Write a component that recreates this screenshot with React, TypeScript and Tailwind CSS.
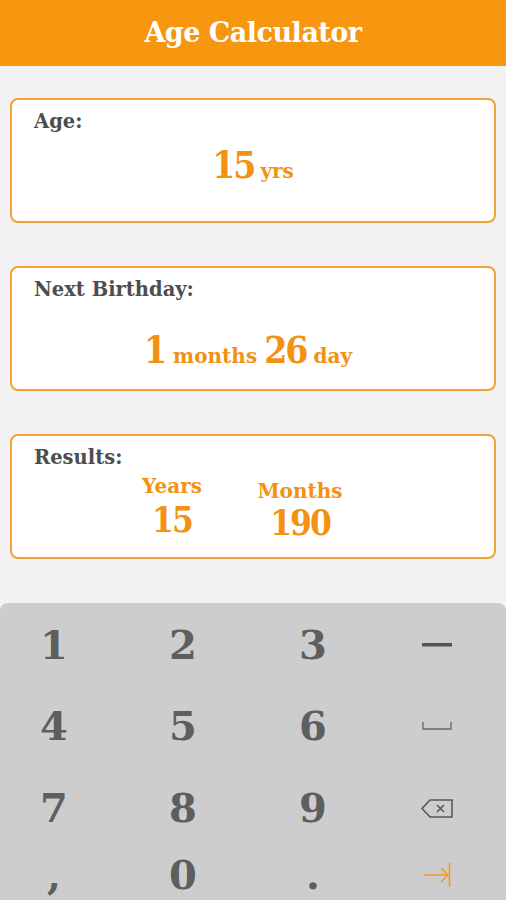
const serif = { fontFamily: '"DejaVu Serif", "Liberation Serif", serif' };

function Card({ label, children, className }: { label: string; children: React.ReactNode; className?: string }) {
  return (
    <div className={`mx-[10px] h-[125px] rounded-[8px] border-2 border-[#f4a135] bg-white px-[22px] ${className ?? ""}`}>
      <p className="pt-[8px] text-[19.5px] font-semibold leading-[28px] text-[#4d4d4d]">{label}</p>
      {children}
    </div>
  );
}

function Minus() {
  return (
    <svg width="30" height="4" viewBox="0 0 30 4">
      <rect x="0" y="0" width="30" height="3.5" fill="#555" />
    </svg>
  );
}

function Space() {
  return (
    <svg width="30" height="10" viewBox="0 0 30 10" fill="none" stroke="#666" strokeWidth="1.3">
      <path d="M1 1v7h28V1" />
    </svg>
  );
}

function Backspace() {
  return (
    <svg width="32" height="19" viewBox="0 0 32 19" fill="none" stroke="#555" strokeWidth="1.5">
      <path d="M9 1h22v17H9L1 9.5z" />
      <path d="M16 6l7 7M23 6l-7 7" />
    </svg>
  );
}

function TabArrow() {
  return (
    <svg width="27" height="24" viewBox="0 0 27 24" fill="none" stroke="#f39a1e" strokeWidth="1.5">
      <path d="M0 12h24M17 5l7 7-7 7M25.5 0v24" />
    </svg>
  );
}

const keys: React.ReactNode[] = [
  "1", "2", "3", <Minus key="m" />,
  "4", "5", "6", <Space key="s" />,
  "7", "8", "9", <Backspace key="b" />,
  ",", "0", ".", <TabArrow key="t" />,
];

export default function App() {
  return (
    <div className="flex h-[900px] w-[506px] flex-col overflow-hidden bg-[#f2f2f2]" style={serif}>
      {/* header */}
      <div className="flex h-[66px] items-center justify-center bg-[#f7960f]">
        <h1 className="text-[27px] font-bold tracking-[-0.5px] text-white">Age Calculator</h1>
      </div>

      <Card label="Age:" className="mt-[32px]">
        <div className="mt-[9px] flex items-baseline justify-center font-bold text-[#f39212]">
          <span className="text-[37px] leading-[40px] tracking-[-2px] font-stretch-condensed">15</span>
          <span className="ml-[6px] text-[20px]">yrs</span>
        </div>
      </Card>

      <Card label="Next Birthday:" className="mt-[43px]">
        <div className="mt-[26px] flex items-baseline justify-center pr-[10px] font-bold text-[#f39212]">
          <span className="text-[37px] leading-[40px] font-stretch-condensed">1</span>
          <span className="ml-[6px] text-[20px]">months</span>
          <span className="ml-[7px] text-[37px] leading-[40px] tracking-[-2px] font-stretch-condensed">26</span>
          <span className="ml-[7px] text-[20px]">day</span>
        </div>
      </Card>

      <Card label="Results:" className="mt-[43px]">
        <div className="flex font-bold text-[#f39212]">
          <div className="ml-[103px] flex w-[70px] flex-col items-center">
            <span className="text-[20px] leading-[28px]">Years</span>
            <span className="text-[35px] leading-[40px] tracking-[-2px] font-stretch-condensed">15</span>
          </div>
          <div className="ml-[43px] flex w-[100px] flex-col items-center">
            <span className="mt-[5px] text-[20px] leading-[28px]">Months</span>
            <span className="-mt-[2px] text-[35px] leading-[40px] tracking-[-2px] font-stretch-condensed">190</span>
          </div>
        </div>
      </Card>

      {/* keyboard */}
      <div className="mt-[44px] grid flex-1 grid-cols-[108px_150px_110px_138px] grid-rows-[80px_82px_82px_auto] rounded-t-[8px] bg-[#cdcdcd] pt-[2px]">
        {keys.map((k, i) => (
          <div key={i} className="flex items-center justify-center text-[40px] font-bold leading-none text-[#5e5e5e]">
            {k}
          </div>
        ))}
      </div>
    </div>
  );
}
